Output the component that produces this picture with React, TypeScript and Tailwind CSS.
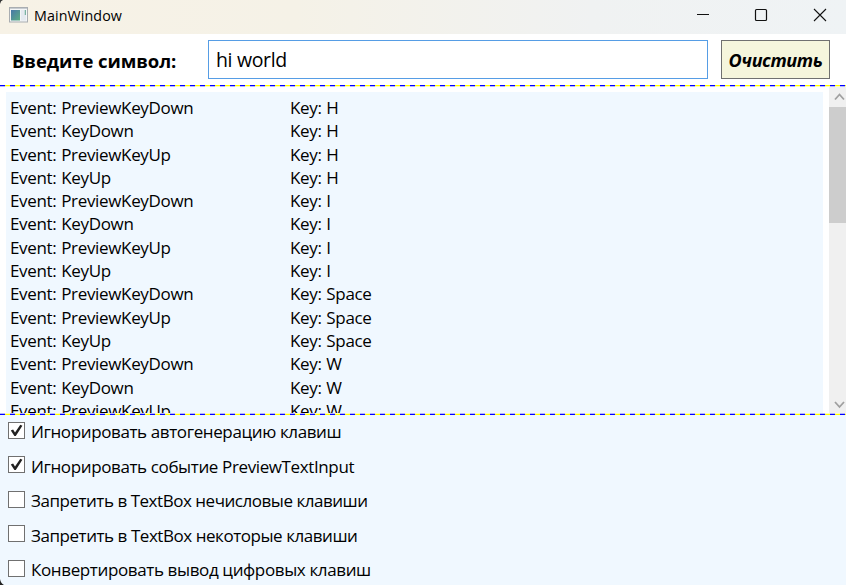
import React from "react";

const events: [string, string][] = [
  ["PreviewKeyDown", "H"],
  ["KeyDown", "H"],
  ["PreviewKeyUp", "H"],
  ["KeyUp", "H"],
  ["PreviewKeyDown", "I"],
  ["KeyDown", "I"],
  ["PreviewKeyUp", "I"],
  ["KeyUp", "I"],
  ["PreviewKeyDown", "Space"],
  ["PreviewKeyUp", "Space"],
  ["KeyUp", "Space"],
  ["PreviewKeyDown", "W"],
  ["KeyDown", "W"],
  ["PreviewKeyUp", "W"],
];

const options = [
  { label: "Игнорировать автогенерацию клавиш", checked: true, tracking: "tracking-[-0.38px]" },
  { label: "Игнорировать событие PreviewTextInput", checked: true, tracking: "tracking-[-0.38px]" },
  { label: "Запретить в TextBox нечисловые клавиши", checked: false, tracking: "tracking-[-0.47px]" },
  { label: "Запретить в TextBox некоторые клавиши", checked: false, tracking: "tracking-[-0.45px]" },
  { label: "Конвертировать вывод цифровых клавиш", checked: false, tracking: "tracking-[-0.37px]" },
];

const strong = "h-px shrink-0 bg-[repeating-linear-gradient(90deg,#0000ff_0_5px,#ffff00_5px_10px)]";
const soft = "h-px shrink-0 bg-[repeating-linear-gradient(90deg,#b3b3ff_0_5px,#ffffb3_5px_10px)]";

function TitleBar() {
  return (
    <header className="flex h-[34px] shrink-0 items-start bg-[linear-gradient(90deg,#f7f2e6_0%,#f5f2e7_35%,#f0f2f2_70%,#eff3f5_100%)]">
      <svg className="ml-[9px] mt-[7px]" width="19" height="16" viewBox="0 0 19 16">
        <defs>
          <linearGradient id="pane" x1="0" y1="0" x2="1" y2="1">
            <stop offset="0" stopColor="#4878a8" />
            <stop offset="1" stopColor="#5cae82" />
          </linearGradient>
        </defs>
        <rect x="0.5" y="0.5" width="18" height="14.5" fill="#f3f5f6" stroke="#a9adb1" />
        <path d="M1 1.5h17" stroke="#c6cbd0" />
        <rect x="2" y="3" width="9" height="10.5" fill="url(#pane)" />
        <rect x="12" y="3" width="5" height="10.5" fill="#e4e9ef" />
        <path d="M16.3 3v5" stroke="#5fa68e" />
      </svg>
      <span className="ml-[6px] mt-[6px] text-[14.3px] leading-[20px] tracking-[0.08px]">MainWindow</span>
      <svg className="ml-auto" width="150" height="34" viewBox="696 0 150 34" fill="none" stroke="#111">
        <path d="M697 14.5h12" />
        <rect x="755.5" y="9.5" width="11" height="11" rx="1" strokeWidth="1.2" />
        <path d="M814 9l12 12M826 9l-12 12" strokeWidth="1.1" />
      </svg>
    </header>
  );
}

export default function App() {
  return (
    <div className="relative flex h-[585px] w-[846px] flex-col overflow-hidden bg-white font-['Open_Sans','Noto_Sans',sans-serif] text-black">
      <TitleBar />
      <section className="flex h-[51px] shrink-0 items-start pt-[6px]">
        <label className="w-[208px] pl-[12px] pt-[8px] text-[18.5px] font-bold leading-[26px] tracking-[-0.07px]">Введите символ:</label>
        <div className="h-[39px] w-[500px] border border-[#569de5] bg-white pl-[7px] pt-[6px] text-[19.5px] leading-[26px] tracking-[-0.35px]">hi world</div>
        <button className="ml-[13px] h-[39px] w-[109px] whitespace-nowrap border border-[#707070] bg-[#f5f5dc] text-[18px] font-bold italic leading-[26px] tracking-[-0.4px]">Очистить</button>
      </section>
      <div className={strong} />
      <div className={soft} />
      <section className="flex h-[326px] shrink-0 overflow-hidden">
        <div className="ml-[6px] mt-[5px] w-[817px] bg-[#f0f8ff] pl-[4px] pt-[4px] text-[17px]">
          {events.map(([name, key], i) => (
            <div key={i} className="flex h-[23.3px] leading-[23.3px] tracking-[-0.33px]">
              <span className="w-[280px] [word-spacing:0.6px]">Event: {name}</span>
              <span className="[word-spacing:0.6px]">Key: {key}</span>
            </div>
          ))}
        </div>
        <div className="ml-[6px] flex w-[17px] shrink-0 flex-col bg-[#f0f0f0]">
          <svg width="17" height="20" viewBox="0 0 17 20" fill="none" stroke="#a0a0a0" strokeWidth="1.8">
            <path d="M6 12.5l4.5-5 4.5 5" />
          </svg>
          <div className="h-[116px] bg-[#cdcdcd]" />
          <svg className="mt-auto" width="17" height="20" viewBox="0 0 17 20" fill="none" stroke="#a0a0a0" strokeWidth="1.8">
            <path d="M6 9l4.5 5 4.5-5" />
          </svg>
        </div>
      </section>
      <div className={soft} />
      <div className={strong} />
      <section className="h-[170px] shrink-0 bg-[#f0f8ff] pl-[8px]">
        {options.map((o) => (
          <div key={o.label} className="flex h-[34.5px] items-start">
            <span className="mt-[6.8px] h-[17px] w-[17px] shrink-0 border border-[#707070] bg-white">
              {o.checked && (
                <svg width="15" height="15" viewBox="0 0 15 15" fill="#212121">
                  <path d="M1.8 7.6l2.3-1.2 1.9 3L11.3 1.8l2.1.9L6.8 13H5.4z" />
                </svg>
              )}
            </span>
            <span className={"ml-[6px] mt-[5px] whitespace-nowrap text-[17px] leading-[24px] " + o.tracking}>{o.label}</span>
          </div>
        ))}
      </section>
      <svg className="absolute left-0 top-0" width="4" height="4" viewBox="0 0 4 4" fill="#333">
        <path d="M0 0h3Q0.7 0.7 0 4z" />
      </svg>
      <svg className="absolute bottom-0 left-0" width="5" height="6" viewBox="0 0 5 6" fill="#222">
        <path d="M0 0Q0.8 4.5 4 6H0z" />
      </svg>
    </div>
  );
}
